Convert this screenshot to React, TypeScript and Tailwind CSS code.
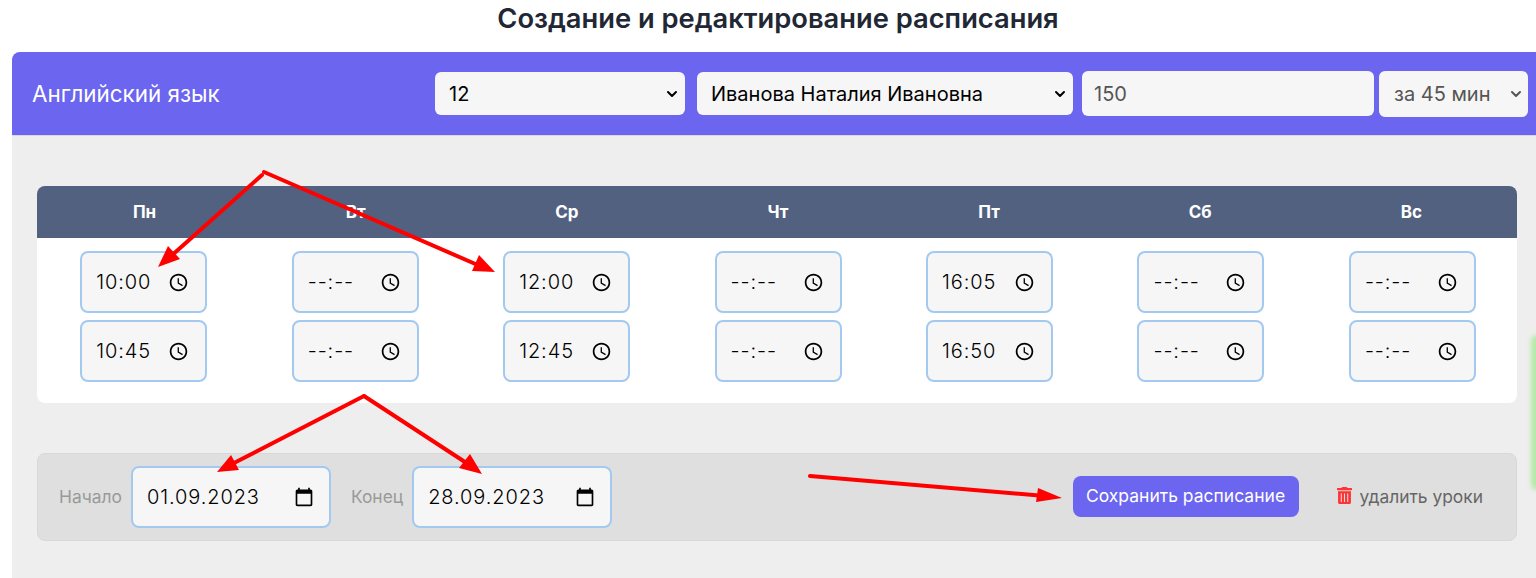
import { ChevronDown } from "lucide-react";
import { FaTrashAlt } from "react-icons/fa";

const days = [
  { name: "Пн", start: "10:00", end: "10:45" },
  { name: "Вт", start: "--:--", end: "--:--" },
  { name: "Ср", start: "12:00", end: "12:45" },
  { name: "Чт", start: "--:--", end: "--:--" },
  { name: "Пт", start: "16:05", end: "16:50" },
  { name: "Сб", start: "--:--", end: "--:--" },
  { name: "Вс", start: "--:--", end: "--:--" },
];

function ClockIcon() {
  return (
    <svg viewBox="0 0 24 24" className="h-[21px] w-[21px] fill-black">
      <path d="M11.99 2C6.47 2 2 6.48 2 12s4.47 10 9.99 10C17.52 22 22 17.52 22 12S17.52 2 11.99 2zM12 20c-4.42 0-8-3.58-8-8s3.58-8 8-8 8 3.58 8 8-3.58 8-8 8zm.5-13H11v6l5.25 3.15.75-1.23-4.5-2.67z" />
    </svg>
  );
}

function CalendarIcon() {
  return (
    <svg viewBox="0 0 24 24" className="h-[20px] w-[20px] fill-black">
      <path d="M20 3h-1V1h-2v2H7V1H5v2H4c-1.1 0-2 .9-2 2v16c0 1.1.9 2 2 2h16c1.1 0 2-.9 2-2V5c0-1.1-.9-2-2-2zm0 18H4V8h16v13z" />
    </svg>
  );
}

function TimeField({ value }: { value: string }) {
  return (
    <div className="flex h-[62px] w-[127px] items-center rounded-lg border-2 border-[#a3c9f1] bg-[#f6f6f6] pl-[14px] pr-[16px]">
      <span className="flex-1 text-[20px] font-light tracking-[0.9px] text-black">{value}</span>
      <ClockIcon />
    </div>
  );
}

function DateField({ value }: { value: string }) {
  return (
    <div className="flex h-[62px] w-[200px] items-center rounded-lg border-2 border-[#a3c9f1] bg-[#f6f6f6] pl-[14px] pr-[15px]">
      <span className="flex-1 text-[20px] font-light tracking-[0.9px] text-black">{value}</span>
      <CalendarIcon />
    </div>
  );
}

function Select({ value, className, muted }: { value: string; className: string; muted?: boolean }) {
  return (
    <div className={`relative ${className}`}>
      <select
        defaultValue={value}
        className={
          muted
            ? "h-full w-full appearance-none rounded-md bg-[#f6f6f6] pl-[15px] text-[20px] text-[#555555]"
            : "h-full w-full appearance-none rounded-md bg-[#f6f6f6] pl-[14px] text-[20px] text-black"
        }
      >
        <option>{value}</option>
      </select>
      <ChevronDown
        strokeWidth={3}
        className={
          muted
            ? "pointer-events-none absolute right-[4px] top-[15px] h-[16px] w-[16px] text-[#555555]"
            : "pointer-events-none absolute right-[5px] top-[14px] h-[16px] w-[16px] text-black"
        }
      />
    </div>
  );
}

function Arrows() {
  return (
    <svg className="pointer-events-none absolute left-0 top-0 h-[578px] w-[1536px]" viewBox="0 0 1536 578">
      <g stroke="#ff0000" strokeWidth="4" strokeLinecap="round" fill="none">
        <path d="M262 175 L170 257" />
        <path d="M264 172 L480 266" />
        <path d="M364 396 L232 464" />
        <path d="M364 396 L468 464" />
        <path d="M810 476 L1045 496" />
      </g>
      <g fill="#ff0000">
        <polygon points="158,267 168,246 180,259" />
        <polygon points="495,272 472,271 479,255" />
        <polygon points="217,472 231,455 239,470" />
        <polygon points="482,474 459,468 470,454" />
        <polygon points="1062,498 1036,502 1038,488" />
      </g>
    </svg>
  );
}

export default function App() {
  return (
    <div className="relative h-[578px] w-[1536px] overflow-hidden bg-white font-['Inter',sans-serif]">
      <h1 className="flex h-[52px] items-start justify-center pl-[20px] pt-[2px] text-[27.3px] font-semibold leading-[34px] text-[#212735]">
        Создание и редактирование расписания
      </h1>

      <div className="ml-[12px] h-[526px] overflow-hidden rounded-tl-lg bg-[#eeeeee]">
        <div className="flex h-[84px] items-center border-b border-[#d9d9e4] bg-[#6b65ef] pl-[20px] pr-[8px]">
          <div className="w-[403px] pt-[1px] text-[22.4px] text-white">Английский язык</div>
          <Select value="12" className="h-[43px] w-[250px]" />
          <Select value="Иванова Наталия Ивановна" className="ml-[12px] h-[43px] w-[376px]" />
          <input
            defaultValue="150"
            className="ml-[9px] h-[45px] w-[292px] rounded-md bg-[#f6f6f6] px-[12px] text-[20px] text-[#555555]"
          />
          <Select value="за 45 мин" muted className="ml-[5px] h-[46px] w-[149px]" />
        </div>

        <div className="pl-[25px] pr-[19px] pt-[50px]">
          <div className="overflow-hidden rounded-lg bg-white">
            <div className="grid h-[52px] grid-cols-7 items-center bg-[#52617f] pl-[2px] pt-[2px]">
              {days.map((day) => (
                <div key={day.name} className="text-center text-[17px] font-bold text-white">
                  {day.name}
                </div>
              ))}
            </div>
            <div className="-mr-[1.1px] ml-[1.1px] grid h-[165px] grid-cols-7 pt-[13px]">
              {days.map((day) => (
                <div key={day.name} className="flex flex-col items-center gap-[7px]">
                  <TimeField value={day.start} />
                  <TimeField value={day.end} />
                </div>
              ))}
            </div>
          </div>

          <div className="mt-[50px] flex h-[88px] items-center rounded-lg border border-[#d8d8d8] bg-[#dfdfdf] pl-[21px] pr-[33px]">
            <span className="mr-[9px] text-[17.4px] text-[#9a9a9a]">Начало</span>
            <DateField value="01.09.2023" />
            <span className="ml-[20px] mr-[9px] text-[17.4px] text-[#9a9a9a]">Конец</span>
            <DateField value="28.09.2023" />
            <button className="mb-[2px] ml-auto h-[41px] w-[226px] rounded-lg bg-[#6b65ef] text-[17.5px] text-white">
              Сохранить расписание
            </button>
            <div className="ml-[38px] flex items-center gap-[8px] text-[17.4px] text-[#666666]">
              <FaTrashAlt className="mb-[2px] h-[19px] w-[15px] text-[#ff3333]" />
              удалить уроки
            </div>
          </div>
        </div>
      </div>

      <div className="absolute left-[1531px] top-[335px] h-[155px] w-[12px] rounded-full bg-[#b5eaa8] blur-[2px]" />
      <Arrows />
    </div>
  );
}
